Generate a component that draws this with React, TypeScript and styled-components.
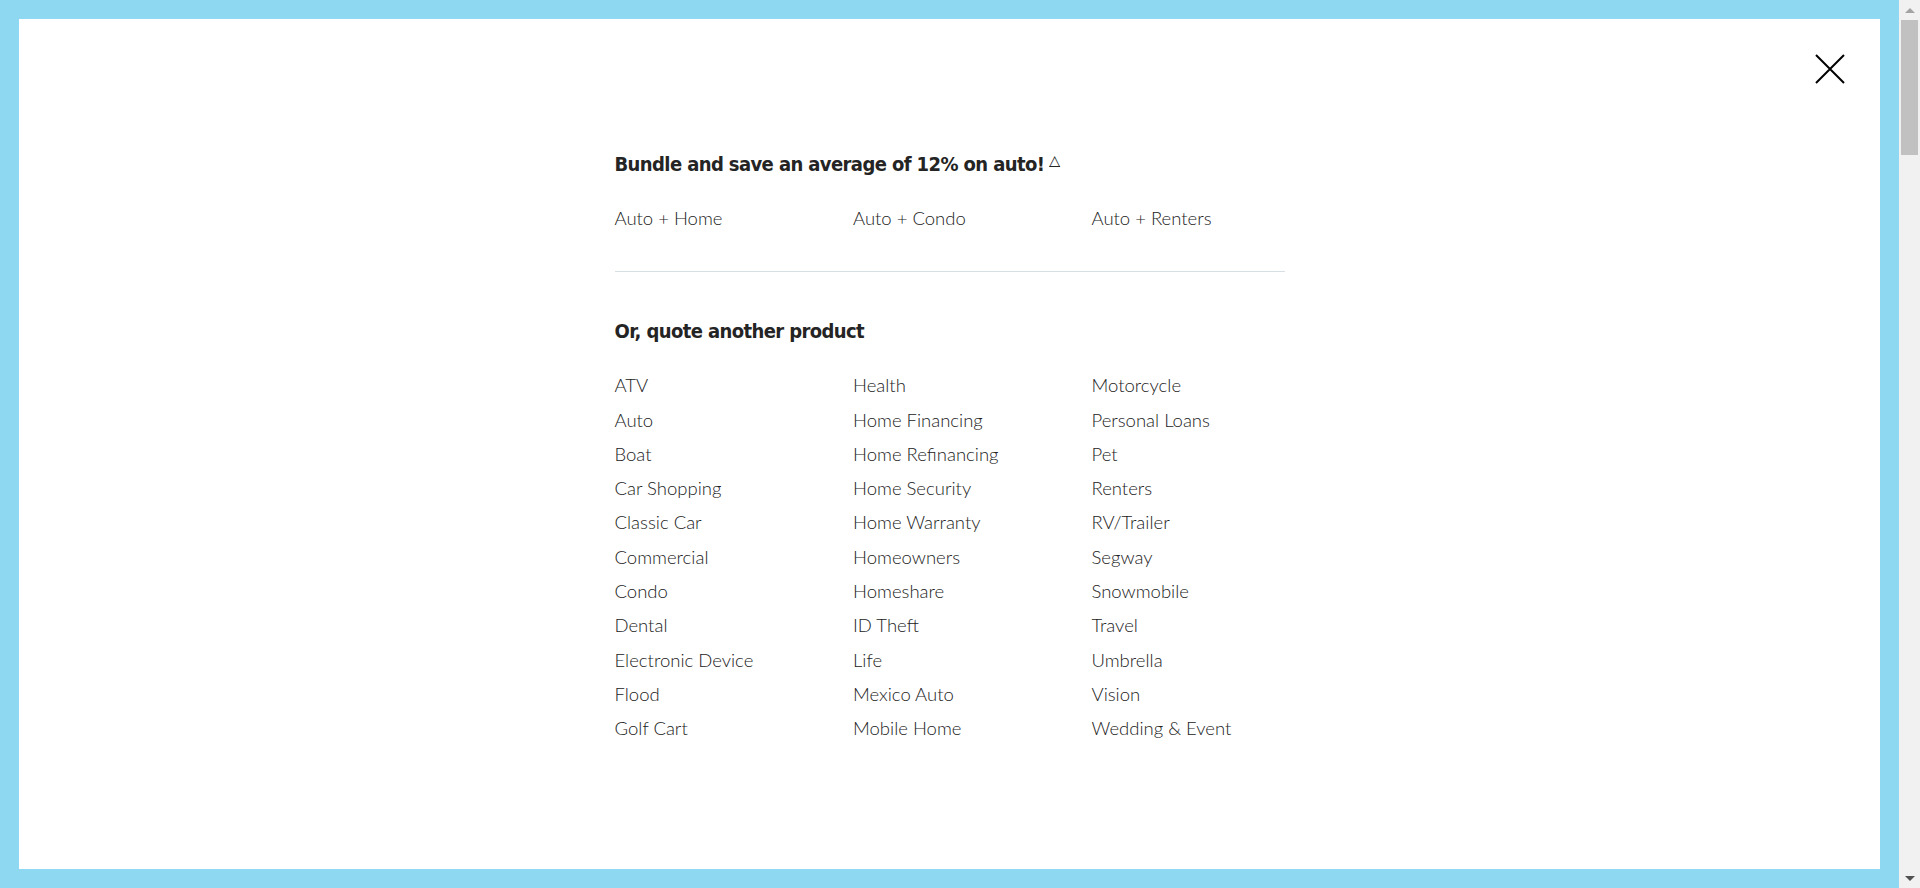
import React from 'react';
import styled, { createGlobalStyle } from 'styled-components';

const sky = '#8fd8f1';
const ink = '#242424';

const GlobalStyle = createGlobalStyle`
  html, body {
    margin: 0;
    padding: 0;
    background: #ffffff;
  }
  body {
    height: 5000px;
    font-family: Lato, "Open Sans", sans-serif;
  }
`;

const Overlay = styled.div`
  position: fixed;
  top: 0;
  left: 0;
  bottom: 0;
  right: 21px;
  background-color: ${sky};
  padding: 19px;
  box-sizing: border-box;
  display: flex;
`;

// drawn stand-in for the page scrollbar seen in the screenshot
const ScrollTrack = styled.div`
  position: fixed;
  top: 0;
  right: 0;
  bottom: 0;
  width: 21px;
  background: #f1f1f1;
  display: flex;
  flex-direction: column;
  align-items: center;
`;

const ScrollArrow = styled.div<{ $down?: boolean }>`
  width: 0;
  height: 0;
  border-left: 5px solid transparent;
  border-right: 5px solid transparent;
  ${(p) => (p.$down ? 'border-top: 5px solid #505050;' : 'border-bottom: 5px solid #a3a3a3;')}
  margin: ${(p) => (p.$down ? 'auto 0 7px' : '8px 0 0')};
`;

const ScrollThumb = styled.div`
  margin-top: 7px;
  width: 17px;
  height: 135px;
  background: #c1c1c1;
`;

const Panel = styled.div`
  flex: 1;
  background: #ffffff;
  position: relative;
  display: flex;
  justify-content: center;
  padding-top: 130px;
`;

const CloseButton = styled.button`
  position: absolute;
  top: 35px;
  right: 35px;
  width: 30px;
  height: 30px;
  padding: 0;
  border: 0;
  background: transparent;
  cursor: pointer;
`;

const Content = styled.div`
  width: 670px;
`;

const Heading = styled.h2`
  margin: 0;
  font-family: "Liberation Sans Narrow", "DejaVu Sans Condensed", sans-serif;
  font-weight: 700;
  font-size: 20px;
  letter-spacing: -0.6px;
  line-height: 30px;
  color: ${ink};
`;

const Note = styled.sup`
  font-family: "DejaVu Sans", sans-serif;
  font-weight: 400;
  font-size: 14px;
  letter-spacing: 0;
  text-decoration: underline;
  margin-left: 5px;
  vertical-align: 6px;
  line-height: 0;
`;

const Grid = styled.ul<{ $columnFlow?: boolean }>`
  list-style: none;
  margin: 0;
  padding: 0;
  display: grid;
  grid-template-columns: 238.5px 238.5px 1fr;
  grid-auto-flow: ${(p) => (p.$columnFlow ? 'column' : 'row')};
  grid-template-rows: ${(p) => (p.$columnFlow ? 'repeat(11, 34.3px)' : 'auto')};
`;

const BundleGrid = styled(Grid)`
  margin-top: 22px;
`;

const ProductGrid = styled(Grid)`
  margin-top: 22px;
`;

const Item = styled.li`
  font-family: Lato, "Open Sans", sans-serif;
  font-weight: 300;
  font-size: 18.5px;
  line-height: 34.3px;
  color: #222222;
  white-space: nowrap;
`;

const Divider = styled.hr`
  border: 0;
  border-top: 1px solid #d5dfe4;
  margin: 36px 0 44px;
`;

const bundles = ['Auto + Home', 'Auto + Condo', 'Auto + Renters'];

const products = [
  'ATV', 'Auto', 'Boat', 'Car Shopping', 'Classic Car', 'Commercial', 'Condo', 'Dental',
  'Electronic Device', 'Flood', 'Golf Cart',
  'Health', 'Home Financing', 'Home Refinancing', 'Home Security', 'Home Warranty',
  'Homeowners', 'Homeshare', 'ID Theft', 'Life', 'Mexico Auto', 'Mobile Home',
  'Motorcycle', 'Personal Loans', 'Pet', 'Renters', 'RV/Trailer', 'Segway', 'Snowmobile',
  'Travel', 'Umbrella', 'Vision', 'Wedding & Event',
];

export default function App() {
  return (
    <>
      <GlobalStyle />
      <Overlay>
        <Panel>
          <CloseButton aria-label="Close">
            <svg width="30" height="30" viewBox="0 0 30 30">
              <path d="M1 1 L29 29 M29 1 L1 29" stroke="#000" strokeWidth="2" />
            </svg>
          </CloseButton>
          <Content>
            <Heading>
              Bundle and save an average of 12% on auto!<Note>△</Note>
            </Heading>
            <BundleGrid>
              {bundles.map((b) => (
                <Item key={b}>{b}</Item>
              ))}
            </BundleGrid>
            <Divider />
            <Heading>Or, quote another product</Heading>
            <ProductGrid $columnFlow>
              {products.map((p) => (
                <Item key={p}>{p}</Item>
              ))}
            </ProductGrid>
          </Content>
        </Panel>
      </Overlay>
      <ScrollTrack>
        <ScrollArrow />
        <ScrollThumb />
        <ScrollArrow $down />
      </ScrollTrack>
    </>
  );
}
